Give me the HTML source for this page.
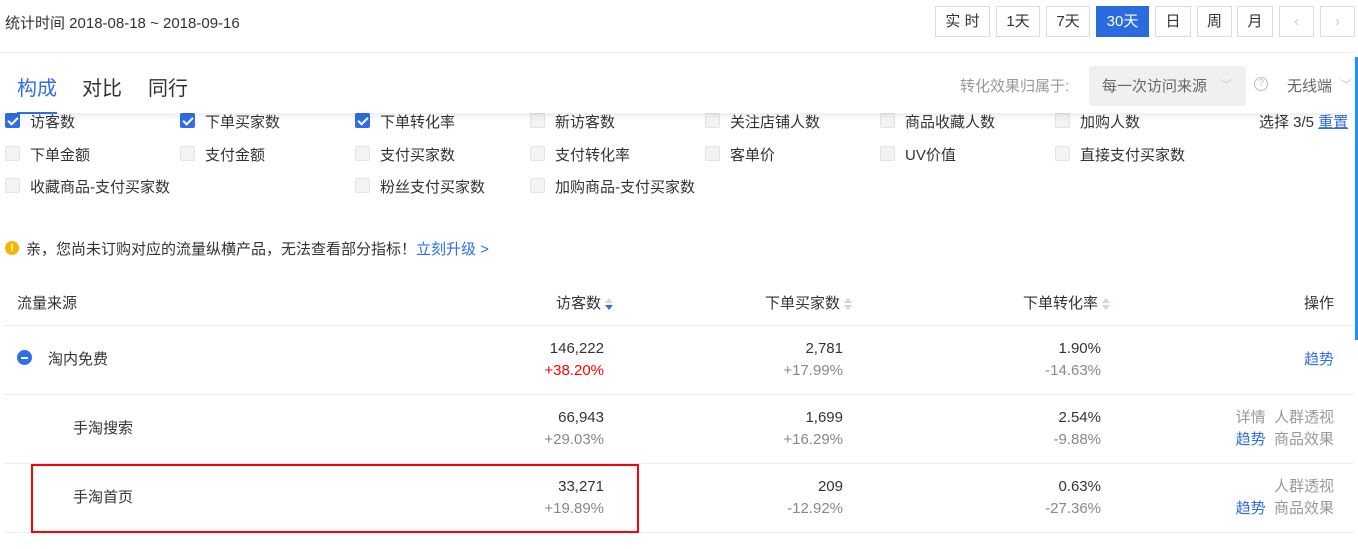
<!DOCTYPE html>
<html><head><meta charset="utf-8"><style>
*{margin:0;padding:0;box-sizing:border-box}
body{width:1358px;height:549px;overflow:hidden;background:#fff;font-family:"Liberation Sans","Noto Sans CJK SC",sans-serif;color:#333;font-size:15px;position:relative}
.a{position:absolute;white-space:nowrap}
.btn{position:absolute;top:6px;height:31px;border:1px solid #ddd;background:#fff;font-size:15px;text-align:center;line-height:29px;color:#333}
.cb{position:absolute;width:15px;height:15px;border:1px solid #e3e3e3;background:#f3f3f3;border-radius:2px}
.cb.on{background:#2f6ee8;border-color:#2f6ee8}
.cb.on:after{content:"";position:absolute;left:4px;top:1px;width:4px;height:8px;border:solid #fff;border-width:0 2px 2px 0;transform:rotate(45deg)}
.lbl{position:absolute;font-size:15px;color:#333;white-space:nowrap}
.line{position:absolute;left:4px;width:1350px;height:1px;background:#eceef1}
.r{position:absolute;text-align:right;font-size:15px;line-height:22px;white-space:nowrap}
.g{color:#888}.b{color:#2f6ee8}
.s{display:inline-block;position:relative;width:8px;height:12px;vertical-align:middle;margin-left:4px}
.s:before{content:"";position:absolute;left:0;top:0;border:4px solid transparent;border-bottom:5px solid #cfd6e0;border-top:0}
.s:after{content:"";position:absolute;left:0;top:7px;border:4px solid transparent;border-top:5px solid #cfd6e0;border-bottom:0}
.s.d:after{border-top-color:#2f6ee8}
</style></head><body>
<div class="a" style="left:5px;top:12px;font-size:15px;color:#333">统计时间 2018-08-18 ~ 2018-09-16</div>
<div class="btn" style="left:935px;width:55px">实 时</div>
<div class="btn" style="left:996px;width:44px">1天</div>
<div class="btn" style="left:1046px;width:44px">7天</div>
<div class="btn" style="left:1096px;width:53px;background:#2a6be0;border-color:#2a6be0;color:#fff">30天</div>
<div class="btn" style="left:1155px;width:36px">日</div>
<div class="btn" style="left:1197px;width:35px">周</div>
<div class="btn" style="left:1237px;width:36px">月</div>
<div class="btn" style="left:1279px;width:35px;color:#ccc">‹</div>
<div class="btn" style="left:1320px;width:35px;color:#ccc">›</div>

<div class="cb on" style="left:5px;top:113px"></div><div class="lbl" style="left:30px;top:111px">访客数</div>
<div class="cb on" style="left:180px;top:113px"></div><div class="lbl" style="left:205px;top:111px">下单买家数</div>
<div class="cb on" style="left:355px;top:113px"></div><div class="lbl" style="left:380px;top:111px">下单转化率</div>
<div class="cb" style="left:530px;top:113px"></div><div class="lbl" style="left:555px;top:111px">新访客数</div>
<div class="cb" style="left:705px;top:113px"></div><div class="lbl" style="left:730px;top:111px">关注店铺人数</div>
<div class="cb" style="left:880px;top:113px"></div><div class="lbl" style="left:905px;top:111px">商品收藏人数</div>
<div class="cb" style="left:1055px;top:113px"></div><div class="lbl" style="left:1080px;top:111px">加购人数</div>
<div class="lbl" style="left:1259px;top:111px">选择 3/5 <span class="b" style="text-decoration:underline">重置</span></div>

<div class="cb" style="left:5px;top:146px"></div><div class="lbl" style="left:30px;top:144px">下单金额</div>
<div class="cb" style="left:180px;top:146px"></div><div class="lbl" style="left:205px;top:144px">支付金额</div>
<div class="cb" style="left:355px;top:146px"></div><div class="lbl" style="left:380px;top:144px">支付买家数</div>
<div class="cb" style="left:530px;top:146px"></div><div class="lbl" style="left:555px;top:144px">支付转化率</div>
<div class="cb" style="left:705px;top:146px"></div><div class="lbl" style="left:730px;top:144px">客单价</div>
<div class="cb" style="left:880px;top:146px"></div><div class="lbl" style="left:905px;top:144px">UV价值</div>
<div class="cb" style="left:1055px;top:146px"></div><div class="lbl" style="left:1080px;top:144px">直接支付买家数</div>

<div class="cb" style="left:5px;top:178px"></div><div class="lbl" style="left:30px;top:176px">收藏商品-支付买家数</div>
<div class="cb" style="left:355px;top:178px"></div><div class="lbl" style="left:380px;top:176px">粉丝支付买家数</div>
<div class="cb" style="left:530px;top:178px"></div><div class="lbl" style="left:555px;top:176px">加购商品-支付买家数</div>

<div class="a" style="left:0;top:52px;width:1354px;height:61px;background:#fff;border-top:1px solid #eee;box-shadow:0 3px 6px rgba(0,0,0,.08)"></div>
<div class="a" style="left:17px;top:72px;font-size:20px;color:#2f6ee8">构成</div>
<div class="a" style="left:17px;top:112px;width:40px;height:2px;background:#2f6ee8"></div>
<div class="a" style="left:82px;top:72px;font-size:20px;color:#333">对比</div>
<div class="a" style="left:148px;top:72px;font-size:20px;color:#333">同行</div>
<div class="a" style="left:960px;top:75px;font-size:15px;color:#999">转化效果归属于:</div>
<div class="a" style="left:1089px;top:66px;width:157px;height:40px;background:#f0f0f0;border-radius:3px"></div>
<div class="a" style="left:1102px;top:75px;font-size:15px;color:#666">每一次访问来源</div>
<div class="a" style="left:1220px;top:76px;font-size:12px;color:#ccc">﹀</div>
<div class="a" style="left:1254px;top:77px;width:14px;height:14px;border:1px solid #bbb;border-radius:50%;font-size:10px;line-height:12px;text-align:center;color:#bbb">?</div>
<div class="a" style="left:1287px;top:75px;font-size:15px;color:#666">无线端</div>
<div class="a" style="left:1340px;top:76px;font-size:12px;color:#ccc">﹀</div>
<div class="a" style="left:1355px;top:57px;width:3px;height:283px;background:#1e90ff"></div>

<div class="a" style="left:5px;top:241px;width:14px;height:14px;border-radius:50%;background:#f5b800;color:#fff;font-size:11px;line-height:14px;text-align:center;font-weight:bold">!</div>
<div class="a" style="left:26px;top:238px;font-size:15px;color:#333">亲，您尚未订购对应的流量纵横产品，无法查看部分指标！<span class="b">立刻升级 &gt;</span></div>

<div class="a" style="left:17px;top:292px">流量来源</div>
<div class="a" style="left:556px;top:292px">访客数<span class="s d"></span></div>
<div class="a" style="left:765px;top:292px">下单买家数<span class="s"></span></div>
<div class="a" style="left:1023px;top:292px">下单转化率<span class="s"></span></div>
<div class="a" style="left:1304px;top:292px">操作</div>
<div class="line" style="top:325px"></div>
<div class="line" style="top:394px"></div>
<div class="line" style="top:463px"></div>
<div class="line" style="top:532px"></div>

<div class="a" style="left:17px;top:350px;width:15px;height:15px;border-radius:50%;background:#2f6ee8"><div style="position:absolute;left:4px;top:6.5px;width:7px;height:2px;background:#fff"></div></div>
<div class="a" style="left:48px;top:348px">淘内免费</div>
<div class="r" style="right:754px;top:338px">146,222<br><span style="color:#f00">+38.20%</span></div>
<div class="r" style="right:515px;top:338px">2,781<br><span class="g">+17.99%</span></div>
<div class="r" style="right:257px;top:338px">1.90%<br><span class="g">-14.63%</span></div>
<div class="r b" style="right:24px;top:349px">趋势</div>

<div class="a" style="left:73px;top:417px">手淘搜索</div>
<div class="r" style="right:754px;top:407px">66,943<br><span class="g">+29.03%</span></div>
<div class="r" style="right:515px;top:407px">1,699<br><span class="g">+16.29%</span></div>
<div class="r" style="right:257px;top:407px">2.54%<br><span class="g">-9.88%</span></div>
<div class="r" style="right:24px;top:407px"><span style="color:#999">详情</span>&nbsp;&nbsp;<span style="color:#999">人群透视</span><br><span class="b">趋势</span>&nbsp;&nbsp;<span style="color:#999">商品效果</span></div>

<div class="a" style="left:73px;top:486px">手淘首页</div>
<div class="r" style="right:754px;top:476px">33,271<br><span class="g">+19.89%</span></div>
<div class="r" style="right:515px;top:476px">209<br><span class="g">-12.92%</span></div>
<div class="r" style="right:257px;top:476px">0.63%<br><span class="g">-27.36%</span></div>
<div class="r" style="right:24px;top:476px"><span style="color:#999">人群透视</span><br><span class="b">趋势</span>&nbsp;&nbsp;<span style="color:#999">商品效果</span></div>

<div class="a" style="left:31px;top:464px;width:608px;height:69px;border:2px solid #f00"></div>
</body></html>
